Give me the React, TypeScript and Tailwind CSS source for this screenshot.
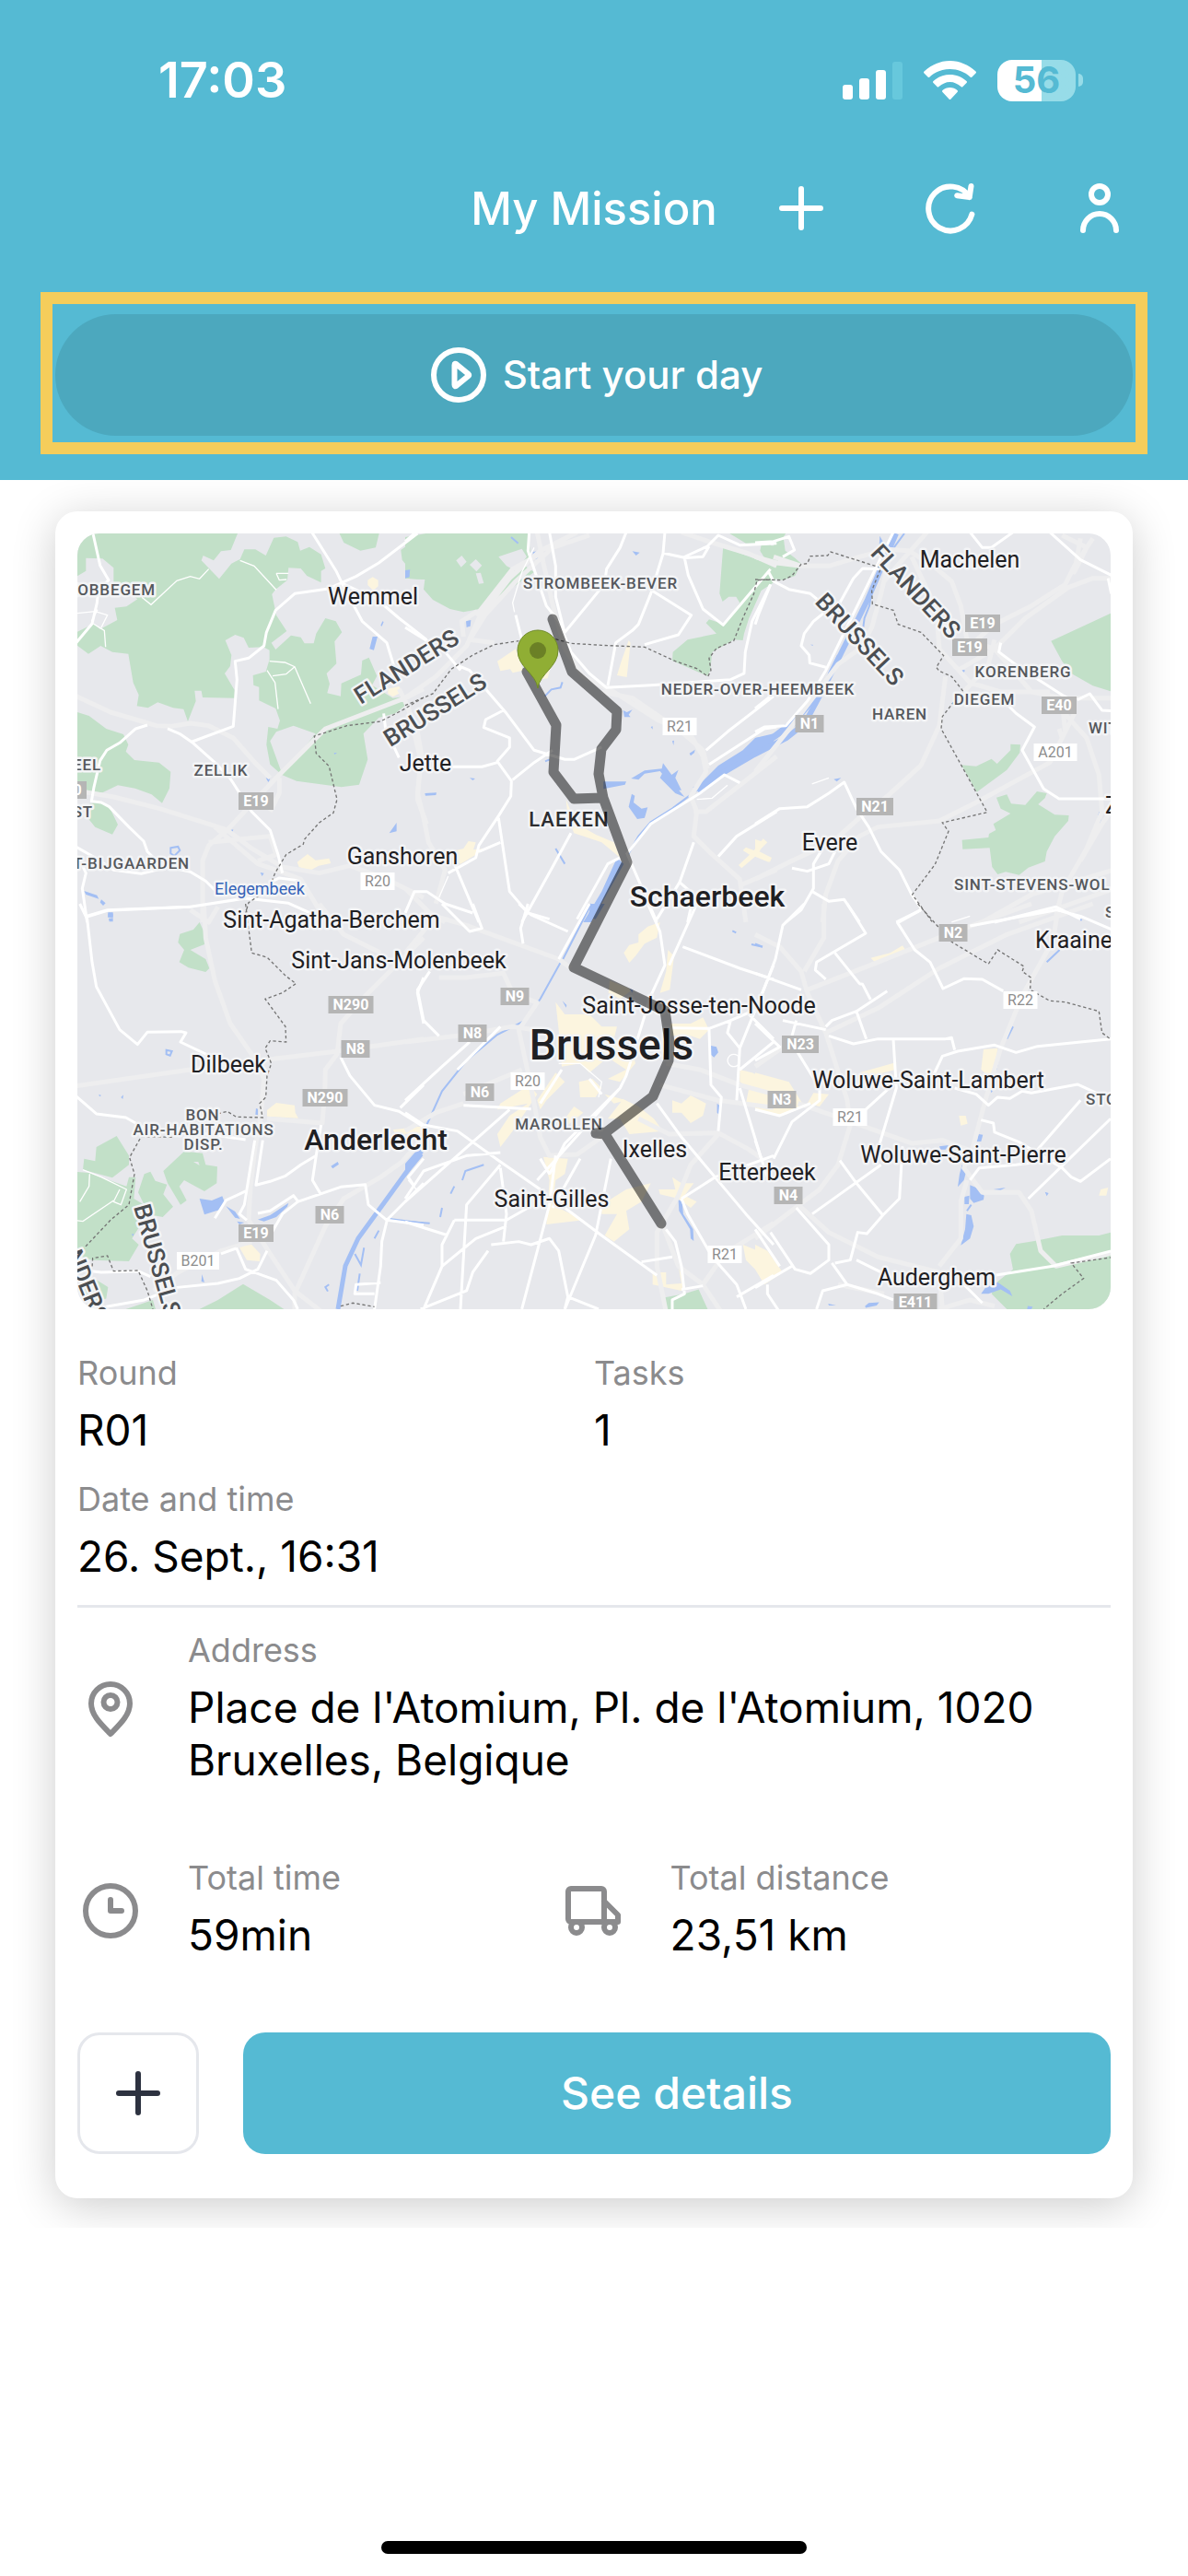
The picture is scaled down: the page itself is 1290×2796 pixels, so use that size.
import type { ReactNode } from 'react';

interface Tile {
  x: number;
  y: number;
  parks: string;
  gaps?: string;
  urban: string;
  water: string;
  canals: string;
  highways: string;
  roads: string;
  lanes: string;
  borders: string;
}

// Every tile is drawn at three times the size it is shown at
const tiles: Tile[] = [
  {
    x: -24,
    y: -18,
    parks:
      'M60 40H600L572 108L540 112L516 142L482 126L476 142L534 202L574 152L602 138L616 106L652 106L686 126L712 68L752 64L790 82L798 110L828 98L866 122L880 168L866 176L866 214L820 192L800 168L760 166L756 206L718 236L706 252L716 300L720 320L754 372L704 410L718 432L768 386L800 392L812 412L842 412L850 380L880 330L914 340L934 376L910 406L916 478L884 510L894 544L886 574L930 584L932 542L996 514L1000 468L1022 458L1048 518L1032 548L1100 590L1138 586L1138 616L1108 640L1054 654L1004 706L1018 790L990 872L932 880L786 860L738 840L700 806L688 742L694 684L724 690L732 664L718 624L664 598L664 554L646 548L644 516L686 504L698 464L698 434L678 424L630 426L614 394L586 384L554 402L574 450L570 486L552 510L584 564L584 590L480 588L476 566L454 566L458 600L432 666L418 626L384 622L334 604L302 622L266 616L272 580L254 540L238 446L186 440L148 420L108 446L60 410V380L126 348L146 366L202 336L194 296L232 292L268 268L190 212V166L154 136L100 134V176L60 200z M924 50L940 84L994 110L1044 100L1056 50z M1200 62L1164 80L1126 108L1130 140L1146 160L1140 200L1200 204z M60 632L110 648L166 690L222 708L238 742L230 764L258 792L338 800L376 830L372 884L348 932L314 904L260 884L204 874L154 898L60 890z M110 934L140 930L176 944L204 1002L186 1034L130 1010L102 976z',
    gaps: 'M60 230L106 180L150 220L134 300L60 300z M700 730L720 700L776 680L848 706L740 840z',
    urban:
      'M1018 206L1034 196L1052 206L1052 226L1036 240L1018 222z M1084 560L1120 552L1130 570L1100 586L1084 576z M788 1124L822 1098L848 1118L892 1112L898 1128L858 1136L830 1152L794 1140z',
    water:
      'M1144 176L1154 174L1154 196L1140 198z M1034 390L1050 390L1038 434L1024 430z M1066 340L1070 342L1064 356L1060 354z M686 850L700 854L694 864z M1112 996L1112 1024L1088 1030z M94 1218L136 1232L142 1244L100 1230z M150 1246L164 1258L156 1266L146 1256z M172 1292H188V1304H172z M570 1020L580 1018L576 1032z M668 1158L680 1160L674 1170z M908 768L918 768L910 774z',
    canals: 'M376 1078L400 1074L406 1086L388 1104L376 1096z',
    highways:
      'M60 580L180 636L330 680L380 682L440 672L500 680L580 720L650 800L700 850M60 890L190 912L340 950L500 1000L560 1020L640 1080L740 1140L860 1160L960 1136L1080 1180L1200 1240M1200 560L1140 590L880 690L720 850L560 1020L500 1070L480 1120V1320M520 1010L660 1130L720 1150L800 1180L860 1280L900 1320M500 1060L700 1040L720 1100L660 1120M1120 560L1150 620L1190 790L1180 920L1210 1000M730 850V900L700 960',
    roads:
      'M122 50L146 158L174 206L140 240L136 280L120 348L60 420M300 678L262 690L210 736L168 760L146 794L126 880L118 926L150 930L176 944L240 1010L288 1056L300 1090L360 1150M366 690L408 708L446 734L520 800L570 852L640 960L700 1020L726 1100L740 1160M446 732L580 682L592 530L586 470L630 460L680 420L688 376L718 304L780 250L890 234L980 194L1054 150L1180 54M836 50L916 178L936 220L1000 340L1080 410L1120 540M934 216L1050 270L1120 330L1210 400M60 1070L130 1110L190 1150L280 1162L370 1140L440 1156L490 1186L520 1216M86 1130L100 1160L88 1210L104 1320M104 1300L170 1280L440 1270L620 1242L760 1258L830 1290M700 1190L730 1176L790 1184M1070 640L1076 690L1120 784',
    lanes:
      'M282 262L312 286L396 208L440 194L470 202L500 170M602 142L648 160L720 238M720 184H760M698 470L748 474L780 488L832 608M690 500L716 540L726 626M708 518L752 512L780 488M70 314L130 308L170 320L150 360M124 348L160 370L164 424M138 302L118 340M720 184L730 206L754 204',
    borders:
      'M1200 588L1130 630L1060 666L950 680L844 714L850 770L892 812L918 920L906 964L860 996L812 1050L808 1066L752 1100L716 1160L706 1186L660 1236L630 1256L620 1290',
  },
  {
    x: 356,
    y: -18,
    parks:
      'M0 66L90 50H400L408 120L390 160L420 180L340 236L300 260L240 300L190 310L146 300L90 270L60 236L64 204L0 200z M1036 94L1088 118L1150 140L1210 160L1206 210L1160 240L1120 330L1104 380L1100 402L1072 400L1000 440L994 500L984 518L870 468L872 440L920 400L1014 380L980 346L990 334L1040 350L1090 280L1078 260L1054 260L1034 276L1024 250z M1050 50L1110 86H1210V50z M1160 94L1190 90L1200 130L1160 116z',
    gaps: 'M166 142L184 126L200 146L182 164z M210 156L230 138L250 158L232 178z M230 184L246 182L256 216L240 218z M304 130L380 104L396 130L360 176L330 160z',
    urban:
      'M300 470L360 430L384 500L350 508L342 496L310 502z M440 470L474 490L464 526L430 530z M728 402L734 410L722 522L690 516L704 470z M524 920L540 960L560 1000L620 1034L680 1060L700 1110L640 1060L550 1030L530 980z M1166 1048L1180 1060L1150 1090L1190 1110L1184 1124L1140 1106L1096 1144L1086 1134L1122 1100L1100 1086L1110 1076L1136 1086z M150 1090L190 1080L206 1056L230 1060L222 1084L260 1080L230 1100L180 1130L150 1110z',
    water:
      'M1200 706L1140 720L1100 760L1020 810L944 886L960 900L1040 840L1120 790L1200 740z M416 114L432 112L434 136L416 138z M0 174L16 172L12 196L0 200z M198 340L214 336L212 356L200 360z M646 862L720 862L716 872L646 886z M736 852L780 826L836 820L840 802L868 840L890 824L880 850L900 890L880 890L830 828L780 836L760 856z M738 902L748 908L744 930L770 950L790 946L780 980L756 984L728 944z M690 1110L712 1130L606 1320H580L640 1220z M710 630L722 636L740 628L728 644L734 652L714 652z M740 112L764 116L752 126z M926 770L944 758L942 768L930 778z M870 730L876 728L874 744z M800 684L806 682V692z M210 850L228 852L220 858z M64 900L102 898L100 906L66 908z M840 830L900 900L910 912L880 900L830 850z',
    canals: 'M950 890L870 950L800 994L760 1040L726 1100M455 584L476 562L506 556L512 538M456 796L470 790M345 66L368 86M520 1130L490 1080',
    highways:
      'M430 50L450 150L484 300L520 430L580 520L680 570L820 660L930 710L970 780L980 830L930 910L950 960L940 1040L990 1090L1090 1180L1110 1320M560 50L440 110L340 200L240 330L200 420L100 520L0 590M600 60L480 100L360 210L260 320L210 400M440 120L350 170L240 310M900 50L1000 84L1120 120L1210 160M0 600L40 700L54 780L40 900L60 980L76 1060L130 1150L100 1260M190 390L184 340L230 310L250 330L210 400L290 410M640 570L740 590L900 700L970 760L985 820M940 960H980L1210 780M1090 1200L1210 1150M0 1210L80 1290L130 1320',
    roads:
      'M404 50L400 110L430 200L460 290L500 340L540 440L600 510L656 556L800 548L1060 530L1104 510L1108 440L1130 340L1190 220M470 50L490 160L490 260L520 380M720 50L700 100L656 170L652 200M846 50L840 120L800 250L760 350L740 370L686 410L660 550M840 118L906 132L984 96L1020 60L1090 92L1210 86M910 134L922 190L970 300L1036 352L1190 170M906 134L970 130L990 96M804 240L932 320L890 384L780 416M640 230L520 376M360 320L380 400M160 480L210 500L330 640L420 760L520 790L550 790L640 750M320 630L262 660L256 686L340 720V750L300 796L346 860L344 910L304 974L240 1070L230 1110L140 1160M150 814H250L300 800M350 856L420 800L480 760M304 980L340 1220L400 1290L470 1310M160 1130L240 1320M240 1090L310 1060M540 1030L480 1140L380 1320M724 1100L820 1320M560 1310L660 1130L700 1110M720 1100L800 1000L960 900L1040 840L1090 866M980 760L1050 700L1200 584M990 806L1170 690L1210 684M1020 1106L1080 1040L1210 960M940 1060L894 1190L940 1230L920 1320M894 1190L820 1310M0 360L130 440L180 500M0 1290L30 1220L70 1220L130 1260L220 1290M0 80L30 54',
    lanes: 'M950 920L1000 916L1050 874M356 310L350 280L380 180L420 100M140 1170L110 1240',
    borders:
      'M0 614L90 576L150 496L220 450L290 416L370 404M490 398L540 412L640 418L780 424L880 470L950 494L986 520L996 500L990 460L1014 428L1070 404L1100 330L1136 250L1146 206L1190 204',
  },
  {
    x: 736,
    y: -18,
    parks:
      'M0 50H102L92 66L98 110L130 134L150 152L130 192L90 206L40 196L0 240V160L40 150L16 110L20 92L60 94L64 78L0 84z M1200 310L1158 314L964 404L1000 470L1030 510L1100 550L1200 580z M672 808L720 812L770 788L788 804L832 760V740L864 742L862 768L820 824L722 896z M786 914L820 904L834 934L880 938L918 894L950 900L944 916L922 936L976 970L1022 972L1020 990L976 1040L950 1090L944 1122L890 1142L860 1166L816 1156L790 1164L772 1140L764 1078L676 1082L674 1052L760 1044L762 1032L784 1020L776 1000L832 966L800 950z',
    urban: 'M0 1050L30 1060L14 1090L54 1110L48 1124L0 1096z',
    water: 'M406 62L416 80L412 110L404 96z M256 854L280 850L266 862z M1120 960L1130 970L1124 1000L1110 1002z M652 486L684 500L680 506L656 492z M0 720L50 712L110 666L190 580L210 584L130 680L60 730L0 770z M180 416H188V420z',
    canals: 'M486 54L430 130L380 240L372 290L356 330L352 360M270 450L240 510M446 60L430 100',
    highways:
      'M60 130L150 160L240 160L340 130L430 106L500 110L580 160L640 210L670 290L690 400L780 430L900 570L1000 590L1200 590M440 120L410 250L380 360L340 430L270 480L210 560L120 680L0 830M1100 70L1040 160L1010 220L900 290L780 350L700 420M1200 200L1100 200L1020 230L880 330L780 430L660 500M560 50L480 140L420 210M510 130L590 300L600 430L700 540L800 570L960 570M620 520L600 680L540 810L430 910L340 980L250 1060L120 1120L0 1180M1000 600L1010 700L960 800L720 930L600 990L400 1010L340 1040L270 1120L230 1230L220 1320M990 620L1080 720L1120 840L1130 960L1080 1080L1000 1220L980 1300M1000 60L1080 100L1040 180L1060 70M780 400L760 480L680 570M1040 640L1000 720L990 690M1200 900L1130 1000L1060 1120M0 130L70 150L150 160M1200 1140L900 1230L740 1320M1200 1200L860 1320',
    roads:
      'M44 180L60 210L110 236L180 250L240 300L190 340L160 380L150 420L176 450L178 476L230 490M420 170L350 168L320 200L270 290L250 320M450 50L230 500L170 600L100 680L30 684L0 700M700 50L740 100L770 100L840 50M960 50L1060 140L1200 210M1150 200L1160 250M800 410L794 440L860 490L1000 580L1030 596M1050 596L1090 576L1130 630L1200 634M810 600L850 640L910 684L870 760L940 886L990 918H1200M0 1000L80 950L170 944L240 900L290 864L330 950L370 1010L410 1090L470 1150L510 1230L544 1280M220 1080L190 1130V1210L150 1280L100 1320M120 1144L170 1154L240 1130L260 1090M186 1220L240 1252L290 1246L340 1320M0 1270M460 1320L540 1280M780 1320L980 1270L1060 1310M50 220L10 320L0 350M0 84L60 80L110 64L128 108L90 130M0 624L80 560',
    lanes: 'M185 870L240 850M640 1320L700 1300',
    borders:
      'M0 204L90 206L120 192L150 154L170 152L180 128L236 126L246 114L410 166L380 240L382 284L450 304L466 350L540 376L614 452L590 490L600 502L640 520L676 566L610 650L606 690L650 770L756 962L610 996L630 1024L586 1132L512 1230L576 1318',
  },
  {
    x: -24,
    y: 402,
    parks:
      'M406 98L450 84L470 60L484 90L486 132L440 150L490 180L502 210L490 222L434 208L404 190L420 150L400 126z M134 792L200 756L240 820L240 850L186 892L90 866L94 830L130 838z M60 872L110 876L232 920L240 890L262 890L256 960L290 980L270 940L290 880L310 872L326 902L364 914L352 946L384 986L350 1020L300 1010L250 1090L272 1110L240 1164L120 1160L60 1140z M352 870L420 806L480 812L490 850L528 856L526 910L486 936L420 900L404 920L428 966L408 980L366 910z M90 1216L130 1222L172 1248L166 1286L130 1296L90 1280z M450 1330L530 1290L612 1238L700 1290L760 1330z M230 1320L318 1290L330 1330z',
    gaps: 'M450 840L470 852L466 840z',
    urban: 'M690 672L720 648L780 656L782 680L792 698L690 692z M596 1112L640 1110L668 1140L666 1164L624 1160z M1100 736L1200 724V744L1110 752z M1150 740L1200 720V750z',
    water:
      'M470 960L510 966L544 952L552 972L536 996L486 1012L478 986z M556 984L586 1002L602 1026L586 1022z M592 1034L616 1038L600 1044z M660 1028L700 1014L760 974L756 986L720 1020L680 1034z M898 854L920 840L924 848L904 862z M172 28H188V44H172z M174 48L188 46V58H176z M654 666L660 668V688L652 686z M478 1206L486 1232L476 1230z M214 630L222 622L220 636z M142 620L150 624L144 628z M248 1076L256 1074L254 1082z',
    canals: 'M362 476L380 480L374 494L362 490zM1090 1026L1200 1040M1054 1064L1040 1090M976 1140L996 1176L1006 1120M992 1204L984 1260M892 1240L880 1248L888 1262',
    highways:
      'M484 0L490 110L520 250L570 390L640 490L680 570L670 690L650 800L636 920L630 1030L700 1140L780 1260L870 1330M60 594L440 540L700 506L920 480L1200 440M1200 110L1110 200L1010 300L930 390L918 490L880 540L878 620L870 714L690 700M860 0L940 100L1060 160M1200 760L1130 840L1060 890L940 960L880 1050L780 1270V1330M640 1100L540 1130L400 1200L320 1260M440 20L500 60L530 10',
    roads:
      'M80 0L104 50L120 190L134 270L210 410L268 458L300 418L410 416L426 420L408 450L500 494M60 620L134 684L230 696L300 736L430 740L540 756L620 768M104 42L170 22L440 10M650 770L616 980L600 1010L624 1030M676 770L654 916L700 904L750 886L800 850L850 820L866 720M850 820L838 900L864 944M930 500L960 560L1040 656L1120 676L1200 726M1124 664L1200 590M520 1024L556 966L620 936M660 1008L700 1000L776 950L790 968M690 1130L660 1190L600 1220L530 1236L390 1250L290 1290L120 1320M700 1080L740 1010L790 970L930 922L1010 914L1020 980L1080 1030L1200 1046M1080 1034L1064 1100L1060 1180L1040 1320M1060 1234L980 1240L976 1270H1040M1080 1030L1200 910M1200 830L1150 890L1170 920M590 1120L620 1190L720 1226L776 1290L790 1320M60 1190L150 1200L270 1196L310 1214M540 1140L590 1122M1200 240L1180 290L1200 390',
    lanes: 'M90 866L150 890L232 930L214 980L190 970L210 930M80 970L110 920L112 880M60 1030L90 1034L190 966',
    borders:
      'M620 0L640 160L690 174L750 234L784 260L740 290L684 310L750 400L752 450L700 446L684 470L704 520L690 560L686 630L666 650L676 696L590 694L560 676L530 684M380 760L280 758L242 826L258 880L240 980L180 1030L76 1140L94 1188L120 1186L122 1154L170 1146L190 1196L270 1194L300 1260L318 1320M930 1310L970 1300L1040 1312',
  },
  {
    x: 356,
    y: 402,
    parks: 'M846 1282L910 1270L956 1256L990 1330H850z',
    urban:
      'M760 100L790 74L830 60L820 110L780 130L750 170L730 192L712 160L730 134L760 126z M856 150L876 170L862 280L830 290L850 220z M666 250L740 280L700 310L662 290z M490 320L520 360L600 360L640 400L690 400L680 440L740 480L750 520L700 580L660 570L720 540L660 500L600 550L570 520L510 530L500 410z M864 390H930L970 370L990 410L960 440L930 430L864 430z M566 580L610 570L640 600L620 630L570 630z M490 550L520 580L460 640L440 670L430 640z M404 590L430 620L350 740L310 792L300 750L340 690L400 650L300 670L310 650z M650 620L720 640L680 650z M1090 540L1130 550L1200 580V670L1110 650L1120 600L1090 580z M870 640L900 650L930 624L980 650L970 690L930 714L900 680L870 680z M710 636L760 660L810 700L840 740L730 750L700 700L660 700z M450 824L530 830L520 880L490 900L480 980L580 1030L460 1044L470 900z M640 980L720 930L800 910L770 970L720 1000L730 1060L680 1100L650 1080L690 1010L640 1010z M826 930L880 930L870 890L900 910L940 910L910 950L950 970L930 990L890 960L830 946z M1100 1110L1150 1130L1160 1180L1200 1210H1160L1110 1160z M806 1200L850 1200L850 1240L900 1236L890 1180L910 1240L900 1260L806 1240z M550 660L580 680L530 720L520 700z',
    water:
      'M604 0H650L620 50L596 44z M0 846L40 800L58 820L0 890z M996 462L1014 466L1020 484L1006 500L994 490z M1016 650L1028 660L1026 690L1016 680z M890 964L902 970L906 1010L938 1060L940 1098L930 1090L928 1060L892 1000z M512 316L526 330L524 338z M730 276L742 280L740 290z',
    canals:
      'M606 0L514 180M510 184L440 310L390 380L300 426L200 510L120 610L70 720M256 850L196 870L186 900M160 920L148 944M120 990L114 1020M0 1034L80 1040M1066 88L1078 94M1128 132L1164 140',
    highways:
      'M60 30L200 70L500 180L540 210M110 240L200 240L320 226L350 290L430 322L370 410L400 550L420 650L440 760L470 820L560 816L640 760M0 450L170 430L350 400L420 410M0 740L100 680L190 650M190 620L380 540M0 160L100 40M850 520L960 540L1090 590L1200 620M830 590L1020 640L1200 664M760 700L860 750L1020 746L1120 800L1190 850M1020 750L930 850L890 950L820 1070V1180L850 1330M840 1050L890 1180L970 1240L1030 1330M970 1240L1040 1140L1200 1040',
    roads:
      'M120 0L210 90L250 80L220 0M370 0L410 36L530 90M400 0L376 80L384 130M600 0L500 180M790 0L830 90L846 200L800 300L720 560L700 600L520 780L470 880M860 200L950 0M904 140L1090 210L1200 246M80 220L40 280L60 380L110 430M210 450L120 530L0 640M310 400L170 540M440 650L510 540M600 570L640 620M870 404L990 406L1060 380L1200 320M990 410L996 590L1030 630L1020 740M1060 380L1050 420L1090 470L1080 640M1090 540L1200 450M190 656L410 668M340 670L0 970M0 680L60 720L170 740L310 840L440 930M0 780M310 850L200 980L180 1320M310 860L330 1010L320 1100M700 600L430 900M490 820L470 980L380 1320M570 830L480 990M670 830L620 1080L520 1320M520 990L640 1080L820 1210M820 650L900 760L1110 1010L1200 1110M1090 600L1160 830M900 960L1010 890L1200 820M900 960L920 1010L1000 1150L1080 1240L1110 1320M1080 1280L1200 1210M160 1030H330L400 990M160 1030L120 1110V1180L60 1320M120 1180L230 1090L330 1050M270 1130L220 1200L200 1260L50 1320M280 1110L370 1100L410 1110L470 1090L500 1130L530 1280L630 1320M530 1280L520 1320M770 1166L870 1150M850 1060L880 1100L900 1180L910 1270L870 1290V1320M900 1256L970 1244M0 1036L140 1080M470 880L440 830M0 960L60 870L200 820L310 810M1120 360L1200 440M1090 470L1200 200',
    lanes: 'M10 900L36 930M500 520L570 520L640 580L630 630M1070 490a20 20 0 1 0 1 0z',
    borders: '',
  },
  {
    x: 736,
    y: 402,
    parks:
      'M850 1108L910 1098L1000 1080L1120 1080L1200 1060V1330H830L790 1290L770 1270L790 1230L840 1190L830 1140z',
    urban:
      'M0 550L110 580L160 660L90 690L0 670z M190 616L240 620L210 660L170 650z M744 474L790 470L780 540L760 560L736 540z M340 550L460 516L456 540L380 560z M376 176L440 160L480 136L490 150L460 170L390 190z M664 690L686 690L692 716L670 722z M1126 930L1150 924L1144 950L1120 950z M0 1110L40 1130L90 1200L30 1240L0 1190z',
    water:
      'M600 790L630 786L620 800L604 800z M728 750L742 752L736 774L722 774z M674 850L688 870L680 900L660 922L666 880z M700 916L720 924L746 950L744 964L712 974L700 960z M682 954L698 950L696 978L682 978z M688 1010L704 1014L712 1050L700 1090L670 1112L684 1060z M736 1270L750 1250L790 1232L830 1260L838 1278L800 1256L760 1270z M358 1310L370 1300L404 1298L396 1308L360 1316z M238 1302L264 1308L240 1308z M888 1310L904 1312L900 1320H886z M944 938L956 942L950 952z M766 606L774 608L770 616z M776 930L816 924L800 932z',
    canals: 'M840 400L820 440M800 470L784 540M992 150L950 190M690 1000L704 980M0 130L24 140M1050 44L1064 54',
    highways:
      'M0 100L80 140L150 220L170 290L230 420L300 640L310 720L270 850L210 930L0 1090M224 0V110L160 220M170 280L400 190L600 110L900 0M230 420L400 340L600 210L820 100L1100 0M990 0L970 120L870 300L800 470L750 640L710 790L680 860L740 940L860 940L900 1000L930 1130L980 1180L1150 1140L1200 1120M140 650L340 720L510 780L610 770L690 800M140 980L240 1070L400 1150L600 1200L610 1320M690 900L670 970L670 1090L600 1180M0 530L100 460M270 1240L420 1270M600 1320L700 1290L780 1310',
    roads:
      'M160 0L90 70L66 180L20 300M300 0L360 96L200 190L196 216L230 246M260 160L340 260L350 262L376 312M540 20L464 62L520 150L570 190L612 276L680 244L740 246L808 284M0 226L150 280M240 430L320 456L400 440L620 440L640 436L650 476M230 400L250 380L330 350L430 284M330 350L362 440M0 390L80 466L0 510M90 380L230 410M134 380L120 430M130 470L210 600V640L120 710L60 830M0 670L80 690L180 650M0 770L40 890M450 440L460 600L400 800M360 670L470 570M580 560L610 496L660 480L780 460L850 484L920 464L1060 450L1200 436M650 600L720 620L760 656L790 630L830 634L870 610L900 616L1050 588L1120 620M736 704L776 714L780 744L860 776L1000 860L1030 890L1060 904L1158 830M800 470M1060 640L920 800M1158 700L890 960M700 900L730 860L850 850L1000 830M276 836L330 910L416 1014L470 960L480 790M186 1010L410 850M416 1014L364 1074L334 1070L310 1160L260 1170M134 990L240 1110V1160L180 1204L130 1190L50 1070M0 1250L120 1180M250 1170L300 1240L400 1270L450 1290M40 1240V1270L80 1330M200 1320L220 1260L300 1240M330 1160L410 1200M780 1210L970 1180L1200 1120M680 1240L740 1300M700 72L980 20L1060 40L1200 100M80 1180L0 1060',
    lanes: '',
    borders:
      'M530 0L640 124L760 196L790 150L876 204L870 220L898 240L896 280L960 316L1010 320L1120 350L1130 420L1170 450M1200 1146L1030 1170L1070 1220L1000 1270L940 1320',
  },
];

type MapLabel = { text: string; x: number; y: number; anchor?: 'start' | 'middle' | 'end'; turn?: number };

const towns: MapLabel[] = [
  { text: 'Wemmel', x: 321, y: 77 },
  { text: 'Machelen', x: 969, y: 37 },
  { text: 'Jette', x: 378, y: 258 },
  { text: 'Ganshoren', x: 353, y: 359 },
  { text: 'Evere', x: 817, y: 344 },
  { text: 'Sint-Agatha-Berchem', x: 276, y: 428 },
  { text: 'Sint-Jans-Molenbeek', x: 349, y: 472 },
  { text: 'Kraaine', x: 1040, y: 450, anchor: 'start' },
  { text: 'Saint-Josse-ten-Noode', x: 675, y: 521 },
  { text: 'Dilbeek', x: 164, y: 585 },
  { text: 'Woluwe-Saint-Lambert', x: 924, y: 602 },
  { text: 'Woluwe-Saint-Pierre', x: 962, y: 683 },
  { text: 'Ixelles', x: 627, y: 677 },
  { text: 'Etterbeek', x: 749, y: 702 },
  { text: 'Saint-Gilles', x: 515, y: 731 },
  { text: 'Auderghem', x: 933, y: 816 },
  { text: 'Z', x: 1116, y: 304, anchor: 'start' },
];

const districts: MapLabel[] = [
  { text: 'KOBBEGEM', x: 85, y: 67, anchor: 'end' },
  { text: 'ZELLIK', x: 156, y: 263 },
  { text: 'EEL', x: 26, y: 257, anchor: 'end' },
  { text: 'ST', x: 17, y: 308, anchor: 'end' },
  { text: 'T-BIJGAARDEN', x: 122, y: 364, anchor: 'end' },
  { text: 'STROMBEEK-BEVER', x: 568, y: 60 },
  { text: 'NEDER-OVER-HEEMBEEK', x: 739, y: 175 },
  { text: 'KORENBERG', x: 1027, y: 156 },
  { text: 'DIEGEM', x: 985, y: 186 },
  { text: 'HAREN', x: 893, y: 202 },
  { text: 'WIT', x: 1098, y: 217, anchor: 'start' },
  { text: 'SINT-STEVENS-WOL', x: 952, y: 387, anchor: 'start' },
  { text: 'S', x: 1116, y: 417, anchor: 'start' },
  { text: 'STO', x: 1095, y: 620, anchor: 'start' },
  { text: 'BON', x: 136, y: 637 },
  { text: 'AIR-HABITATIONS', x: 137, y: 653 },
  { text: 'DISP.', x: 137, y: 669 },
  { text: 'MAROLLEN', x: 523, y: 647 },
];

const regions: MapLabel[] = [
  { text: 'FLANDERS', x: 362, y: 152, turn: -32 },
  { text: 'BRUSSELS', x: 393, y: 199, turn: -32 },
  { text: 'FLANDERS', x: 904, y: 69, turn: 47 },
  { text: 'BRUSSELS', x: 843, y: 121, turn: 47 },
  { text: 'BRUSSELS', x: 61, y: 731, turn: 74, anchor: 'start' },
  { text: 'NDERS', x: -13, y: 782, turn: 68, anchor: 'start' },
];

const shields: { text: string; x: number; y: number; w: number; light?: boolean }[] = [
  { text: 'E19', x: 194, y: 290, w: 38 },
  { text: 'E40', x: -9, y: 278, w: 38 },
  { text: 'R20', x: 326, y: 377, w: 37, light: true },
  { text: 'R21', x: 654, y: 209, w: 37, light: true },
  { text: 'E19', x: 983, y: 97, w: 38 },
  { text: 'E19', x: 969, y: 123, w: 38 },
  { text: 'E40', x: 1066, y: 186, w: 38 },
  { text: 'A201', x: 1062, y: 237, w: 47, light: true },
  { text: 'N1', x: 795, y: 206, w: 31 },
  { text: 'N21', x: 866, y: 296, w: 40 },
  { text: 'N290', x: 297, y: 511, w: 49 },
  { text: 'N8', x: 302, y: 559, w: 31 },
  { text: 'N290', x: 269, y: 612, w: 49 },
  { text: 'N6', x: 274, y: 739, w: 31 },
  { text: 'E19', x: 194, y: 759, w: 38 },
  { text: 'B201', x: 131, y: 789, w: 46, light: true },
  { text: 'N9', x: 475, y: 502, w: 31 },
  { text: 'N8', x: 429, y: 542, w: 31 },
  { text: 'R20', x: 489, y: 594, w: 37, light: true },
  { text: 'N6', x: 437, y: 606, w: 31 },
  { text: 'R21', x: 703, y: 782, w: 37, light: true },
  { text: 'N2', x: 951, y: 433, w: 31 },
  { text: 'R22', x: 1024, y: 506, w: 37, light: true },
  { text: 'N23', x: 785, y: 554, w: 40 },
  { text: 'N3', x: 765, y: 614, w: 31 },
  { text: 'R21', x: 839, y: 633, w: 37, light: true },
  { text: 'N4', x: 772, y: 718, w: 31 },
  { text: 'E411', x: 910, y: 834, w: 47 },
];

function Layer({ children }: { children: (tile: Tile) => ReactNode }) {
  return (
    <g>
      {tiles.map((tile) => (
        <g key={`${tile.x}/${tile.y}`} transform={`translate(${tile.x} ${tile.y}) scale(0.3333)`}>
          {children(tile)}
        </g>
      ))}
    </g>
  );
}

function Labels({ items, className }: { items: MapLabel[]; className: string }) {
  return (
    <g className={className} stroke="#f3f4f6" strokeWidth="5" strokeLinejoin="round" paintOrder="stroke">
      {items.map((l) => (
        <text
          key={`${l.text}${l.x}`}
          x={l.x}
          y={l.y}
          textAnchor={l.anchor ?? 'middle'}
          transform={l.turn ? `rotate(${l.turn} ${l.x} ${l.y})` : undefined}
        >
          {l.text}
        </text>
      ))}
    </g>
  );
}

function RouteMap() {
  return (
    <svg viewBox="0 0 1122 842" role="img" aria-label="Route map" className="block w-full rounded-3xl bg-[#e7e8ec] font-['Roboto',sans-serif]">
      <Layer>{(t) => <path d={t.parks} fill="#c2e0c8" />}</Layer>
      <Layer>{(t) => <path d={t.gaps} fill="#e7e8ec" />}</Layer>
      <Layer>{(t) => <path d={t.urban} fill="#fcf5df" />}</Layer>
      <Layer>
        {(t) => (
          <>
            <path d={t.water} fill="#a3bff4" />
            <path d={t.canals} fill="none" stroke="#a3bff4" strokeWidth="6" />
          </>
        )}
      </Layer>
      {/* main canal */}
      <path d="M889 0L858 72L812 165L790 206L770 222L735 240L670 278" fill="none" stroke="#a3bff4" strokeWidth="6" />
      <path d="M374 670L340 717L305 765L291 795L283 842" fill="none" stroke="#a3bff4" strokeWidth="5" />
      <Layer>{(t) => <path d={t.highways} fill="none" stroke="#eeeeef" strokeWidth="15" strokeLinejoin="round" />}</Layer>
      <Layer>
        {(t) => (
          <>
            <path d={t.lanes} fill="none" stroke="#fff" strokeWidth="4" />
            <path d={t.roads} fill="none" stroke="#fff" strokeWidth="9" strokeLinejoin="round" />
            <path d={t.borders} fill="none" stroke="#757575" strokeWidth="4" strokeDasharray="10 8" />
          </>
        )}
      </Layer>

      {shields.map((s) => (
        <g key={`${s.text}${s.x}`}>
          <rect x={s.x - s.w / 2} y={s.y - 9} width={s.w} height="19" fill={s.light ? '#fff' : '#b5b5b5'} />
          <text
            x={s.x}
            y={s.y + 6}
            textAnchor="middle"
            className={s.light ? 'fill-[#8d8d8d] text-[16px]' : 'fill-white text-[16px] font-bold'}
          >
            {s.text}
          </text>
        </g>
      ))}

      <Labels items={districts} className="fill-[#55585c] text-[17px] font-medium tracking-wider" />
      <Labels items={regions} className="fill-[#4b4e52] text-[26px] font-medium" />
      <Labels items={[{ text: 'Elegembeek', x: 198, y: 392 }]} className="fill-[#3563b8] text-[18px]" />
      <Labels items={towns} className="fill-[#1f2023] text-[25px]" />
      <Labels items={[{ text: 'LAEKEN', x: 534, y: 318 }]} className="fill-[#2c2d30] text-[22px] font-medium tracking-wider" />
      <Labels
        items={[
          { text: 'Schaerbeek', x: 684, y: 405 },
          { text: 'Anderlecht', x: 324, y: 669 },
        ]}
        className="fill-[#1f2023] text-[32px] font-medium"
      />
      <Labels items={[{ text: 'Brussels', x: 580, y: 571 }]} className="fill-[#1f2023] text-[46px] font-medium" />

      {/* planned route */}
      <path
        d="M516 93L537 150L586 193L585 213L569 234L566 261L571 287L597 357L539 471L638 518L643 552L642 572L625 611L574 650L563 651L573 652L634 749M488 150L520 208L517 259L539 288L570 287"
        fill="none"
        stroke="#000"
        strokeOpacity="0.5"
        strokeWidth="11"
        strokeLinecap="round"
        strokeLinejoin="round"
      />
      <path d="M500 168C498 152 478 145 478 127a22 22 0 0 1 44 0C522 145 502 152 500 168z" fill="#90ae34" stroke="#6f8a28" strokeWidth="1" />
      <circle cx="500" cy="127" r="9" fill="#6b8026" />
    </svg>
  );
}

function Icon({ children, className }: { children: ReactNode; className?: string }) {
  return (
    <svg
      viewBox="0 0 24 24"
      fill="none"
      stroke="currentColor"
      strokeWidth="2"
      strokeLinecap="round"
      strokeLinejoin="round"
      aria-hidden="true"
      className={`size-18 shrink-0 ${className ?? ''}`}
    >
      {children}
    </svg>
  );
}

function Field({ label, value }: { label: string; value: string }) {
  return (
    <div>
      <dt className="text-[36px] leading-[48px] text-[#8b8b8d]">{label}</dt>
      <dd className="mt-2.5 text-[46px] leading-[57px] text-black">{value}</dd>
    </div>
  );
}

function StatusBar() {
  return (
    <div className="flex h-[174px] items-center justify-between pr-[114px] pl-[172px]">
      <span className="text-[54px] leading-none font-semibold">17:03</span>
      <div className="flex items-center gap-[23px]">
        <svg viewBox="0 0 65 42" className="h-[42px] w-[65px]" fill="#fff" aria-hidden="true">
          <rect x="0" y="26" width="11" height="16" rx="3" />
          <rect x="18" y="19" width="11" height="23" rx="3" />
          <rect x="36" y="10" width="11" height="32" rx="3" />
          <rect x="54" y="1" width="11" height="41" rx="3" fill="#67c8dc" />
        </svg>
        <svg viewBox="0 0 57 42" className="h-[42px] w-[57px]" fill="#fff" aria-hidden="true">
          <path d="M28.500 0C39 0 49 4.500 56.500 11.500Q57.500 12.500 56.500 13.500L52.500 17.500Q51.500 18.500 50.500 17.500C44.500 12 37 9 28.500 9S12.500 12 6.500 17.500Q5.500 18.500 4.500 17.500L.5 13.500Q-.5 12.500 .5 11.500C8 4.500 18 0 28.500 0z" />
          <path d="M28.500 15C35 15 41.500 17.500 46.500 22Q47.500 23 46.500 24L42.500 28Q41.500 29 40.500 28C37 25 33 23 28.500 23S20 25 16.500 28Q15.500 29 14.500 28L10.500 24Q9.500 23 10.500 22C15.500 17.500 22 15 28.500 15z" />
          <path d="M28.500 29C31.500 29 34.500 30 36.500 32Q37.500 33 36.500 34L29.500 41.500Q28.500 42.500 27.500 41.500L20.500 34Q19.500 33 20.500 32C22.500 30 25.500 29 28.500 29z" />
        </svg>
        <div className="flex items-center gap-[3px]">
          <div className="flex h-[45px] w-[85px] items-center justify-center rounded-2xl bg-linear-to-r from-white from-56% to-[#97dce8] to-56% text-[40px] leading-none font-bold text-[#55bad3]">
            56
          </div>
          <div className="h-3.5 w-[5px] rounded-r-full bg-[#97dce8]" />
        </div>
      </div>
    </div>
  );
}

export default function App() {
  return (
    <div className="flex min-h-screen flex-col bg-white font-['Inter','Liberation_Sans',sans-serif]">
      <header className="bg-[#55bad3] pb-7 text-white">
        <StatusBar />
        <div className="grid h-26 grid-cols-[1fr_auto_1fr] items-center">
          <h1 className="col-start-2 text-[49px] leading-none font-medium">My Mission</h1>
          <nav className="flex justify-end gap-[90px] pr-15">
            <button type="button" aria-label="Add">
              <Icon>
                <path d="M12 5v14M5 12h14" />
              </Icon>
            </button>
            <button type="button" aria-label="Refresh">
              <Icon>
                <path d="M19.800 14.200A8 8 0 1 1 18.900 8M19.500 4L18.900 8L14.400 7.400" />
              </Icon>
            </button>
            <button type="button" aria-label="Profile">
              <Icon>
                <circle cx="12" cy="7" r="3" />
                <path d="M6 20a6 6 0 0 1 12 0" />
              </Icon>
            </button>
          </nav>
        </div>
        <div className="mx-11 mt-[39px] border-[13px] border-[#f5cd5b] px-[3px] pt-[11px] pb-[7px]">
          <button
            type="button"
            className="flex h-33 w-full items-center justify-center gap-3 rounded-full bg-[#4ca8be] text-[42px] leading-none font-medium"
          >
            <Icon>
              <circle cx="12" cy="12" r="9" />
              <path d="M10.500 8.400v7.200q0 .8.700.3l4.300-3.500q.5-.4 0-.8l-4.300-3.500q-.7-.5-.7.300z" />
            </Icon>
            Start your day
          </button>
        </div>
      </header>

      <main className="overflow-hidden px-15 pt-[34px] pb-8">
        <article className="rounded-3xl bg-white px-6 pt-6 pb-12 shadow-[0_8px_48px_rgba(0,0,0,0.2)]">
          <RouteMap />

          <dl className="mt-[45px] grid grid-cols-2 gap-y-[22px]">
            <Field label="Round" value="R01" />
            <Field label="Tasks" value="1" />
            <Field label="Date and time" value="26. Sept., 16:31" />
          </dl>

          <hr className="mt-6 border-t-3 border-[#e5e7ec]" />

          <dl className="mt-[22px] flex items-center gap-12">
            <Icon className="mt-1 text-[#8b8b8d]">
              <path d="M12 3a7 7 0 0 1 7 7c0 4.300-3.800 7.700-7 11-3.200-3.300-7-6.700-7-11a7 7 0 0 1 7-7z" />
              <circle cx="12" cy="9.500" r="2.500" />
            </Icon>
            <Field label="Address" value="Place de l'Atomium, Pl. de l'Atomium, 1020 Bruxelles, Belgique" />
          </dl>

          <div className="mt-[75px] grid grid-cols-[7fr_8fr]">
            <dl className="flex items-center gap-12">
              <Icon className="mt-1 text-[#8b8b8d]">
                <circle cx="12" cy="12" r="9" />
                <path d="M12 8v4h4" />
              </Icon>
              <Field label="Total time" value="59min" />
            </dl>
            <dl className="flex items-center gap-12">
              <Icon className="mt-1 text-[#8b8b8d]">
                <path d="M4 4h11a1 1 0 0 1 1 1v11H4a1 1 0 0 1-1-1V5a1 1 0 0 1 1-1zM16 8.500l5 5V16h-5" />
                <circle cx="6" cy="18" r="2" />
                <circle cx="18" cy="18" r="2" />
              </Icon>
              <Field label="Total distance" value="23,51 km" />
            </dl>
          </div>

          <div className="mt-[77px] flex gap-12">
            <button
              type="button"
              aria-label="Add task"
              className="flex size-33 items-center justify-center rounded-3xl border-3 border-[#e5e7ec] text-[#2d3240]"
            >
              <Icon>
                <path d="M12 5v14M5 12h14" />
              </Icon>
            </button>
            <button type="button" className="h-33 flex-1 rounded-3xl bg-[#55bad3] text-[48px] leading-none font-medium text-white">
              See details
            </button>
          </div>
        </article>
      </main>

      <div className="mx-auto mt-auto mb-6 h-3.5 w-[462px] rounded-full bg-black" />
    </div>
  );
}
